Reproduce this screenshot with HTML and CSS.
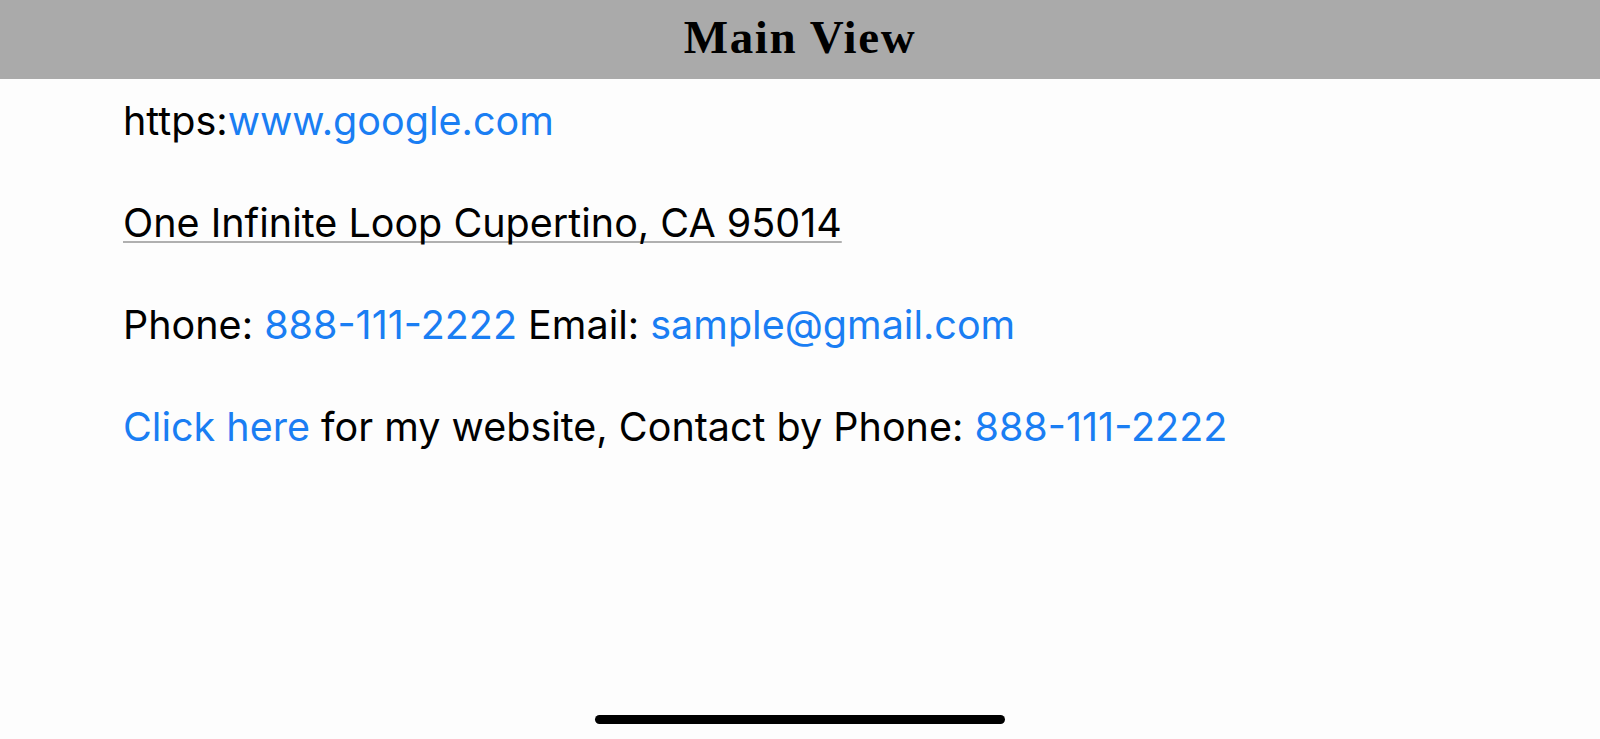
FILE: index.html
```html
<!DOCTYPE html>
<html>
<head>
<meta charset="utf-8">
<link rel="stylesheet" href="styles.css">
</head>
<body>
<div class="screen">
  <header class="navbar"><h1 class="title">Main View</h1></header>
  <main class="content">
    <p class="line">https:<a class="link">www.google.com</a></p>
    <p class="line"><span class="address">One Infinite Loop Cupertino, CA 95014</span></p>
    <p class="line">Phone: <a class="link">888-111-2222</a> Email: <a class="link">sample@gmail.com</a></p>
    <p class="line"><a class="link">Click here</a> for my website, Contact by Phone: <a class="link">888-111-2222</a></p>
  </main>
  <div class="home-row"><div class="home-indicator"></div></div>
</div>
</body>
</html>
```
FILE: styles.css
```css
html, body {
  margin: 0;
  padding: 0;
  background: #fdfdfd;
}
.screen {
  height: 739px;
  display: flex;
  flex-direction: column;
}
.navbar {
  height: 79px;
  background: #aaaaaa;
  display: flex;
  align-items: center;
  justify-content: center;
  flex-shrink: 0;
}
.title {
  margin: 0;
  font-family: "Liberation Serif", serif;
  font-weight: bold;
  font-size: 47px;
  letter-spacing: 1.6px;
  color: #000;
  padding-bottom: 5px;
}
.content {
  flex: 1;
  display: flex;
  flex-direction: column;
  gap: 54px;
  padding: 18px 0 0 123px;
  font-family: Inter, "Liberation Sans", sans-serif;
  font-size: 39.5px;
  color: #000;
}
.line {
  margin: 0;
  line-height: 48px;
  white-space: nowrap;
}
.link {
  color: #1a7ef3;
}
.address {
  text-decoration: underline;
  text-decoration-color: #b0b0b0;
  text-decoration-thickness: 2px;
  text-underline-offset: 4px;
  text-decoration-skip-ink: none;
}
.home-row {
  display: flex;
  justify-content: center;
  padding-bottom: 15px;
}
.home-indicator {
  width: 410px;
  height: 9px;
  border-radius: 5px;
  background: #000;
}
```
